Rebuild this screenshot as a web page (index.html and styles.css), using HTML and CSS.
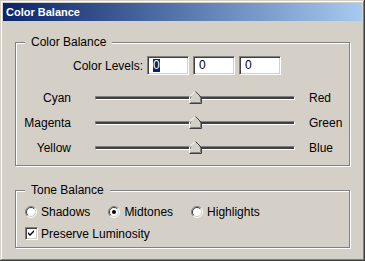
FILE: index.html
```html
<!DOCTYPE html>
<html>
<head>
<meta charset="utf-8">
<link rel="stylesheet" href="styles.css">
</head>
<body>
<div class="window">
  <div class="titlebar">Color Balance</div>
  <fieldset class="group group-color">
    <legend>Color Balance</legend>
    <div class="levels">
      <span class="levels-label">Color Levels:</span>
      <div class="edit"><span class="sel">0</span></div>
      <div class="edit">0</div>
      <div class="edit">0</div>
    </div>
    <div class="sliders">
      <span class="lbl-left">Cyan</span>
      <div class="track"><svg class="thumb" width="13" height="13" viewBox="0 0 13 13"><path d="M0.5 12.5 V6 L6 0.5" fill="none" stroke="#fff"/><path d="M6.5 0.5 L12.5 6.5 V12.5 H0.5" fill="none" stroke="#404040"/><path d="M1.5 11.5 V6.4 L6.3 1.6 L11.5 6.8 V11.5 Z" fill="#d4d0c8"/><path d="M11.5 7 V11.5 H1.5" fill="none" stroke="#808080"/></svg></div>
      <span class="lbl-right">Red</span>
      <span class="lbl-left">Magenta</span>
      <div class="track"><svg class="thumb" width="13" height="13" viewBox="0 0 13 13"><path d="M0.5 12.5 V6 L6 0.5" fill="none" stroke="#fff"/><path d="M6.5 0.5 L12.5 6.5 V12.5 H0.5" fill="none" stroke="#404040"/><path d="M1.5 11.5 V6.4 L6.3 1.6 L11.5 6.8 V11.5 Z" fill="#d4d0c8"/><path d="M11.5 7 V11.5 H1.5" fill="none" stroke="#808080"/></svg></div>
      <span class="lbl-right">Green</span>
      <span class="lbl-left">Yellow</span>
      <div class="track"><svg class="thumb" width="13" height="13" viewBox="0 0 13 13"><path d="M0.5 12.5 V6 L6 0.5" fill="none" stroke="#fff"/><path d="M6.5 0.5 L12.5 6.5 V12.5 H0.5" fill="none" stroke="#404040"/><path d="M1.5 11.5 V6.4 L6.3 1.6 L11.5 6.8 V11.5 Z" fill="#d4d0c8"/><path d="M11.5 7 V11.5 H1.5" fill="none" stroke="#808080"/></svg></div>
      <span class="lbl-right">Blue</span>
    </div>
  </fieldset>
  <fieldset class="group group-tone">
    <legend>Tone Balance</legend>
    <div class="radios">
      <label class="opt"><svg class="radio" width="12" height="12" viewBox="0 0 12 12"><circle cx="6" cy="6" r="4.5" fill="#fff"/><path d="M2.1 9.9 A5.5 5.5 0 0 1 9.9 2.1" fill="none" stroke="#808080"/><path d="M9.9 2.1 A5.5 5.5 0 0 1 2.1 9.9" fill="none" stroke="#fff"/><path d="M2.8 9.2 A4.5 4.5 0 0 1 9.2 2.8" fill="none" stroke="#404040"/><path d="M9.2 2.8 A4.5 4.5 0 0 1 2.8 9.2" fill="none" stroke="#d4d0c8"/></svg>Shadows</label>
      <label class="opt"><svg class="radio" width="12" height="12" viewBox="0 0 12 12"><circle cx="6" cy="6" r="4.5" fill="#fff"/><path d="M2.1 9.9 A5.5 5.5 0 0 1 9.9 2.1" fill="none" stroke="#808080"/><path d="M9.9 2.1 A5.5 5.5 0 0 1 2.1 9.9" fill="none" stroke="#fff"/><path d="M2.8 9.2 A4.5 4.5 0 0 1 9.2 2.8" fill="none" stroke="#404040"/><path d="M9.2 2.8 A4.5 4.5 0 0 1 2.8 9.2" fill="none" stroke="#d4d0c8"/><circle cx="6" cy="6" r="2" fill="#000"/></svg>Midtones</label>
      <label class="opt"><svg class="radio" width="12" height="12" viewBox="0 0 12 12"><circle cx="6" cy="6" r="4.5" fill="#fff"/><path d="M2.1 9.9 A5.5 5.5 0 0 1 9.9 2.1" fill="none" stroke="#808080"/><path d="M9.9 2.1 A5.5 5.5 0 0 1 2.1 9.9" fill="none" stroke="#fff"/><path d="M2.8 9.2 A4.5 4.5 0 0 1 9.2 2.8" fill="none" stroke="#404040"/><path d="M9.2 2.8 A4.5 4.5 0 0 1 2.8 9.2" fill="none" stroke="#d4d0c8"/></svg>Highlights</label>
    </div>
    <label class="check-row"><span class="checkbox"><svg width="7" height="7" viewBox="0 0 7 7"><path d="M0 2 L2 4 L6 0 V2 L2 6 L0 4 Z" fill="#000"/></svg></span>Preserve Luminosity</label>
  </fieldset>
</div>
</body>
</html>
```

FILE: styles.css
```css
html, body {
  margin: 0;
  padding: 0;
}
body {
  width: 365px;
  height: 261px;
  overflow: hidden;
  font-family: "Liberation Sans", Arial, sans-serif;
  font-size: 12px;
  color: #000;
}
.window {
  box-sizing: border-box;
  width: 365px;
  height: 261px;
  padding: 3px;
  background: #d4d0c8;
  box-shadow: inset -1px -1px 0 #404040, inset 1px 1px 0 #d4d0c8, inset -2px -2px 0 #808080, inset 2px 2px 0 #fff;
}
.titlebar {
  height: 18px;
  line-height: 19px;
  padding-left: 3px;
  background: linear-gradient(to right, #0a246a, #a6caf0);
  color: #fff;
  font-weight: bold;
  font-size: 11px;
}
.group {
  margin: 0 12px;
  padding: 0;
  border: 1px solid #808080;
  box-shadow: inset 1px 1px 0 #fff, 1px 1px 0 #fff;
  min-width: 0;
}
.group legend {
  margin-left: 9px;
  padding: 0 6px;
  line-height: 14px;
  height: 14px;
  background: #d4d0c8;
}
.group-color {
  margin-top: 14px;
  height: 131px;
  box-sizing: border-box;
}
.group-tone {
  margin-top: 17px;
}
.levels {
  display: grid;
  grid-template-columns: 127px 42px 42px 42px;
  column-gap: 4px;
  align-items: center;
  margin-top: 7px;
}
.levels-label {
  text-align: right;
}
.edit {
  box-sizing: border-box;
  height: 19px;
  background: #fff;
  border: 1px solid;
  border-color: #808080 #fff #fff #808080;
  box-shadow: inset 1px 1px 0 #404040, inset -1px -1px 0 #d4d0c8;
  padding-left: 5px;
  line-height: 17px;
}
.sel {
  display: inline-block;
  background: #0a246a;
  color: #fff;
  line-height: 13px;
  padding: 0;
}
.sliders {
  display: grid;
  grid-template-columns: 55px 200px auto;
  grid-auto-rows: 25px;
  column-gap: 24px;
  align-items: center;
  margin-top: 10px;
}
.lbl-left {
  text-align: right;
}
.lbl-right {
  margin-left: -10px;
}
.track {
  position: relative;
  box-sizing: border-box;
  height: 4px;
  border: 1px solid;
  border-color: #808080 #fff #fff #808080;
  box-shadow: inset 1px 1px 0 #404040, inset -1px -1px 0 #404040;
  background: #d4d0c8;
}
.thumb {
  position: absolute;
  left: 93px;
  top: -6px;
}
.radios {
  display: flex;
  gap: 18px;
  margin: 7px 0 0 9px;
}
.opt {
  display: flex;
  align-items: center;
  height: 16px;
}
.radio {
  margin-right: 4px;
}
.check-row {
  display: flex;
  align-items: center;
  height: 15px;
  margin: 6px 0 6px 9px;
}
.checkbox {
  box-sizing: border-box;
  width: 13px;
  height: 13px;
  margin-right: 3px;
  background: #fff;
  border: 1px solid;
  border-color: #808080 #fff #fff #808080;
  box-shadow: inset 1px 1px 0 #404040, inset -1px -1px 0 #d4d0c8;
  display: flex;
  align-items: center;
  justify-content: center;
}
```
